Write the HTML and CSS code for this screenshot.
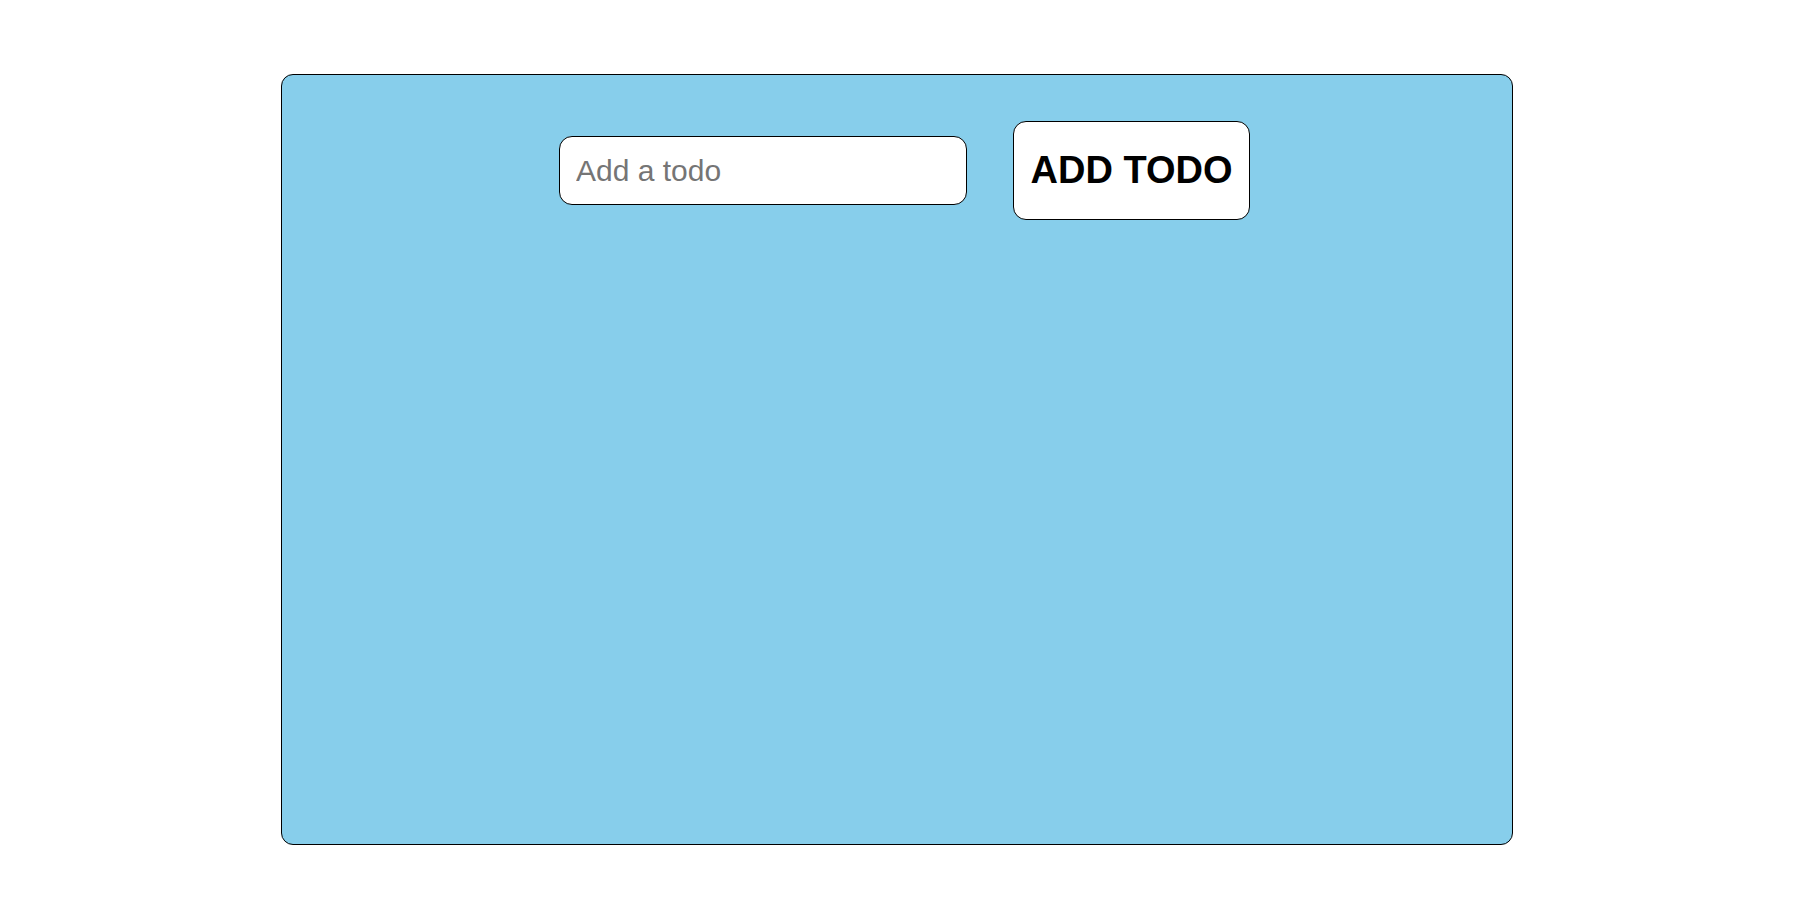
FILE: index.html
```html
<!DOCTYPE html>
<html>
<head>
<meta charset="utf-8">
<link rel="stylesheet" href="styles.css">
</head>
<body>
<div class="app">
  <div class="form-row">
    <input class="todo-input" type="text" placeholder="Add a todo">
    <button class="add-btn">ADD TODO</button>
  </div>
</div>
</body>
</html>
```
FILE: styles.css
```css
html, body {
  margin: 0;
  padding: 0;
  background: #ffffff;
  font-family: "Liberation Sans", Arial, sans-serif;
}
.app {
  box-sizing: border-box;
  margin: 74px 0 0 281px;
  width: 1232px;
  height: 771px;
  background: #87ceeb;
  border: 1px solid #000;
  border-radius: 12px;
}
.form-row {
  display: flex;
  align-items: center;
  gap: 46px;
  padding: 46px 0 0 277px;
}
.todo-input {
  box-sizing: border-box;
  width: 408px;
  height: 69px;
  padding: 0 16px;
  font-family: "Liberation Sans", Arial, sans-serif;
  font-size: 30px;
  border: 1px solid #000;
  border-radius: 13px;
  background: #fff;
  outline: none;
}
.todo-input::placeholder {
  color: #757575;
}
.add-btn {
  box-sizing: border-box;
  width: 237px;
  height: 99px;
  padding: 0;
  font-family: "Liberation Sans", Arial, sans-serif;
  font-size: 38px;
  font-weight: bold;
  color: #000;
  background: #fff;
  border: 1px solid #000;
  border-radius: 13px;
}
```
